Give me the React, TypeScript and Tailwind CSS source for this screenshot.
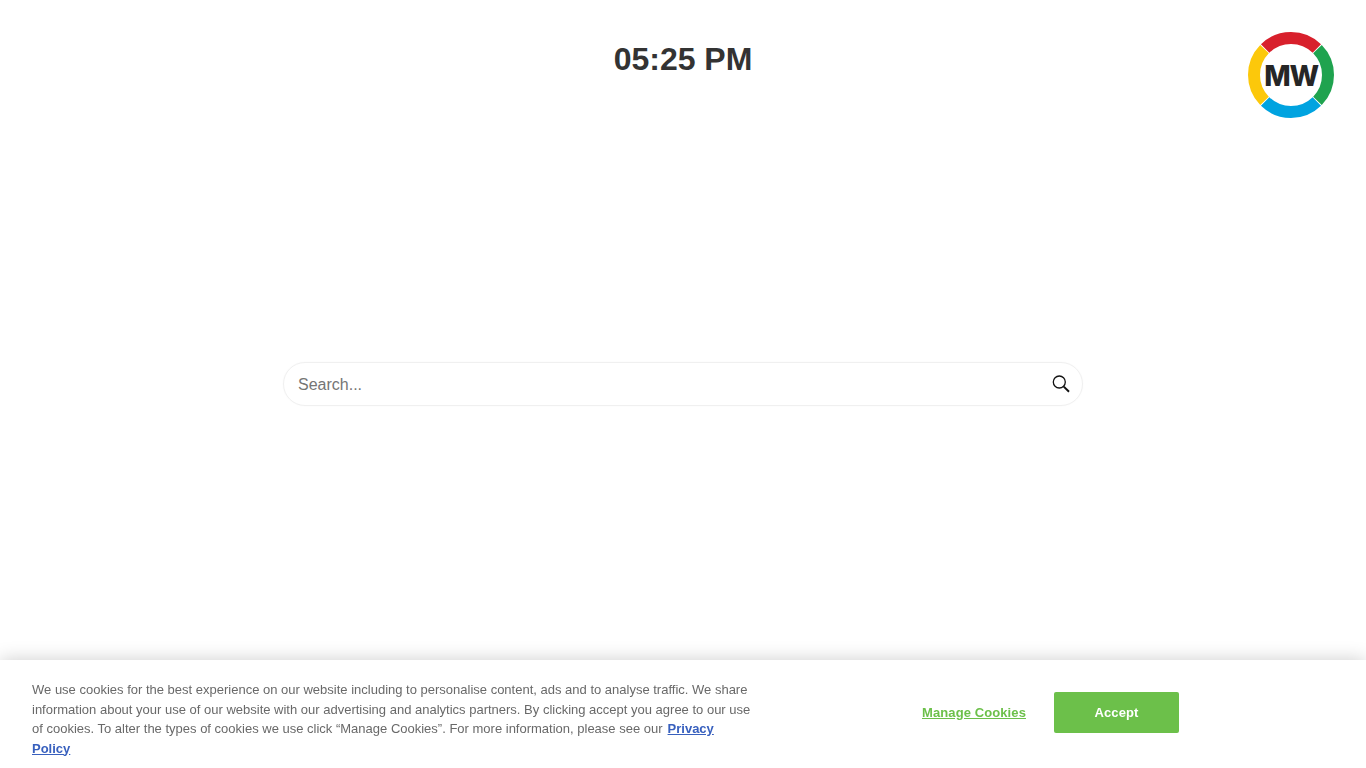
import React from "react";

function Logo() {
  return (
    <svg width="86" height="86" viewBox="0 0 86 86" className="block">
      <path d="M17.16 16.52 A37 37 0 0 1 68.84 16.52" fill="none" stroke="#d8202c" strokeWidth="12" />
      <path d="M69.48 17.16 A37 37 0 0 1 69.48 68.84" fill="none" stroke="#1fa34f" strokeWidth="12" />
      <path d="M68.84 69.48 A37 37 0 0 1 17.16 69.48" fill="none" stroke="#00a3e0" strokeWidth="12" />
      <path d="M16.52 68.84 A37 37 0 0 1 16.52 17.16" fill="none" stroke="#fcc80b" strokeWidth="12" />
      <text x="43" y="53.5" textAnchor="middle" fontFamily="Inter, 'Liberation Sans', sans-serif" fontWeight="800" fontSize="28" letterSpacing="-1.2" fill="#262626">
        MW
      </text>
    </svg>
  );
}

function SearchIcon() {
  return (
    <svg width="20" height="20" viewBox="0 0 20 20" fill="none" stroke="#111" className="block">
      <circle cx="8.3" cy="8" r="6" strokeWidth="1.3" />
      <path d="M12.8 12.6 L18 17.8" strokeWidth="2" />
    </svg>
  );
}

function CookieBanner() {
  return (
    <div className="fixed inset-x-0 bottom-0 h-[108px] bg-white shadow-[0_0_18px_rgba(0,0,0,0.2)] flex">
      <p className="w-[722px] ml-8 mt-5 text-[13px] leading-[19.5px] text-[#696969]">
        We use cookies for the best experience on our website including to personalise content, ads and to analyse traffic. We share information about your use of our website with our advertising and analytics partners. By clicking accept you agree to our use of cookies. To alter the types of cookies we use click “Manage Cookies”. For more information, please see our
        <a href="#" className="ml-[5px] font-bold underline text-[#3860be]">Privacy Policy</a>
      </p>
      <div className="ml-[168px] mt-8 h-[41px] flex items-center gap-7">
        <button className="text-[13px] font-bold tracking-[0.1px] underline text-[#6cc04a]">Manage Cookies</button>
        <button className="w-[125px] h-[41px] rounded-[2px] bg-[#6cc04a] text-[13px] font-bold tracking-[0.1px] text-white">Accept</button>
      </div>
    </div>
  );
}

export default function App() {
  return (
    <div className="min-h-screen bg-white font-['Liberation_Sans',Arial,sans-serif]">
      <header className="grid grid-cols-[1fr_auto_1fr] pt-8 px-8">
        <div />
        <h1 className="mt-[7px] text-[32px] leading-[40px] font-bold text-[#333]">05:25 PM</h1>
        <div className="justify-self-end">
          <Logo />
        </div>
      </header>

      <div className="mt-[244px] mx-auto w-[800px] h-11 flex items-center rounded-full border border-[#f0f0f0] shadow-[0_0_2px_rgba(0,0,0,0.03)] pl-[14px] pr-[11px]">
        <input placeholder="Search..." className="flex-1 pt-px outline-none bg-transparent text-base text-[#333] placeholder:text-[#757575]" />
        <SearchIcon />
      </div>

      <CookieBanner />
    </div>
  );
}
